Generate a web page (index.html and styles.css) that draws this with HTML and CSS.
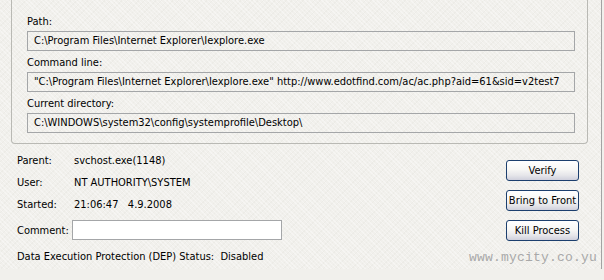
FILE: index.html
```html
<!DOCTYPE html>
<html>
<head>
<meta charset="utf-8">
<link rel="stylesheet" href="styles.css">
</head>
<body>
<div class="frame">
  <div class="group">
    <div class="time-row"><span class="time-label">Time:</span><span>0:00:00.156</span></div>
    <div class="field">
      <div class="flabel">Path:</div>
      <div class="rbox">C:\Program Files\Internet Explorer\Iexplore.exe</div>
    </div>
    <div class="field">
      <div class="flabel">Command line:</div>
      <div class="rbox">"C:\Program Files\Internet Explorer\Iexplore.exe" http://www.edotfind.com/ac/ac.php?aid=61&amp;sid=v2test7</div>
    </div>
    <div class="field">
      <div class="flabel">Current directory:</div>
      <div class="rbox">C:\WINDOWS\system32\config\systemprofile\Desktop\</div>
    </div>
  </div>
  <div class="lower">
    <div class="info">
      <div class="row"><span class="key">Parent:</span><span>svchost.exe(1148)</span></div>
      <div class="row"><span class="key">User:</span><span>NT AUTHORITY\SYSTEM</span></div>
      <div class="row"><span class="key">Started:</span><span>21:06:47&nbsp;&nbsp;&nbsp;4.9.2008</span></div>
      <div class="row comment-row"><span class="ckey">Comment:</span><span class="input"></span></div>
      <div class="row dep">Data Execution Protection (DEP) Status:&nbsp;&nbsp;Disabled</div>
    </div>
    <div class="buttons">
      <div class="btn">Verify</div>
      <div class="btn">Bring to Front</div>
      <div class="btn">Kill Process</div>
    </div>
  </div>
  <div class="watermark">www.mycity.co.yu</div>
</div>
</body>
</html>
```

FILE: styles.css
```css
html, body {
  margin: 0;
  padding: 0;
}
body {
  width: 604px;
  height: 280px;
  overflow: hidden;
  background: #f1f0ec;
  font-family: "DejaVu Sans Condensed", "DejaVu Sans", sans-serif;
  font-size: 11px;
  color: #000;
}
.frame {
  position: relative;
  width: 602px;
  height: 280px;
  box-sizing: border-box;
  border-right: 1px solid #a3a3a3;
  padding-left: 11px;
  background-color: #f1f0ec;
  background-image:
    repeating-linear-gradient(45deg, rgba(255,255,255,0.35) 0 1px, transparent 1px 3px),
    repeating-linear-gradient(-45deg, rgba(200,200,190,0.12) 0 1px, transparent 1px 4px);
}
.group {
  width: 577px;
  box-sizing: border-box;
  border: 1px solid #b9b9b4;
  border-top: none;
  border-radius: 0 0 4px 4px;
  padding: 0 12px 10px 15px;
}
.time-row {
  display: flex;
  height: 13px;
  line-height: 13px;
  margin-top: -11px;
  margin-bottom: 13px;
}
.time-label {
  width: 59px;
}
.field + .field {
  margin-top: 5px;
}
.flabel {
  height: 13px;
  line-height: 13px;
  margin-bottom: 3px;
}
.rbox {
  height: 20px;
  box-sizing: border-box;
  border: 1px solid #a4a6a8;
  padding-left: 6px;
  line-height: 18px;
  white-space: nowrap;
  overflow: hidden;
}
.lower {
  display: flex;
  justify-content: space-between;
  padding-left: 6px;
  padding-right: 22px;
}
.info {
  display: flex;
  flex-direction: column;
  gap: 9px;
  padding-top: 10px;
}
.row {
  display: flex;
  align-items: center;
  height: 13px;
  line-height: 13px;
}
.key {
  width: 57px;
}
.ckey {
  width: 55px;
}
.comment-row {
  height: 20px;
}
.input {
  width: 210px;
  height: 20px;
  box-sizing: border-box;
  border: 1px solid #a4a6a8;
  background: #ffffff;
}
.dep {
  margin-top: 1px;
}
.buttons {
  display: flex;
  flex-direction: column;
  gap: 9px;
  padding-top: 16px;
}
.btn {
  width: 73px;
  height: 21px;
  box-sizing: border-box;
  border: 1px solid #1c3f6e;
  border-radius: 3px;
  background: linear-gradient(to bottom, #ffffff 0%, #f7f7f5 45%, #e6e6ea 75%, #cfd0dc 100%);
  text-align: center;
  line-height: 19px;
  white-space: nowrap;
}
.watermark {
  position: absolute;
  right: 4px;
  top: 261px;
  font-family: "Liberation Mono", "DejaVu Sans Mono", monospace;
  font-size: 13px;
  letter-spacing: 0.2px;
  color: #a8a8a8;
}
```
